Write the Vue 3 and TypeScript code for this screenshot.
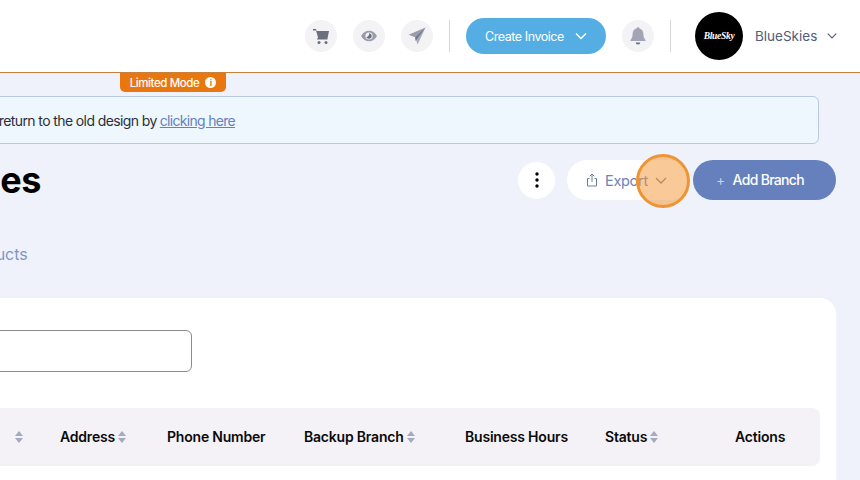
<script setup lang="ts">
const columns = [
  { label: 'Branch Name', sort: true },
  { label: 'Address', sort: true },
  { label: 'Phone Number', sort: false },
  { label: 'Backup Branch', sort: true },
  { label: 'Business Hours', sort: false },
  { label: 'Status', sort: true },
  { label: 'Actions', sort: false },
]
</script>

<template>
  <div class="app">
    <header class="topbar">
      <button class="round-icon" aria-label="Cart">
        <svg width="18" height="18" viewBox="0 0 18 18">
          <path d="M1 2h3l.6 2H17l-1.400 7H6.200L4 3.400H1z" fill="#6b6f7e" />
          <path d="M5.500 11h10v1.600H5z" fill="#6b6f7e" />
          <circle cx="7" cy="15.400" r="1.500" fill="#6b6f7e" />
          <circle cx="14" cy="15.400" r="1.500" fill="#6b6f7e" />
        </svg>
      </button>
      <button class="round-icon" aria-label="Preview">
        <svg width="18" height="18" viewBox="0 0 18 18">
          <path d="M1 9c2-3.600 4.800-5.300 8-5.300S15 5.400 17 9c-2 3.600-4.800 5.300-8 5.300S3 12.600 1 9z" fill="#9a9cab" />
          <circle cx="9" cy="9" r="3.600" fill="#f3f3f5" />
          <path d="M9 6.200A2.800 2.800 0 1 1 6.300 10 3 3 0 0 0 9 6.200z" fill="#6b6f7e" />
        </svg>
      </button>
      <button class="round-icon" aria-label="Send">
        <svg width="20" height="20" viewBox="0 0 20 20">
          <path d="M18.500 1.500 1.500 8.800l6.600 2.400z" fill="#9a9cab" />
          <path d="M18.500 1.500 8.100 11.200l2.500 7.300z" fill="#a9abb8" />
          <path d="M18.500 1.500 8.100 11.200l.5 3.800z" fill="#74778a" />
        </svg>
      </button>
      <span class="divider"></span>
      <button class="create-btn">
        Create Invoice
        <svg width="12" height="8" viewBox="0 0 12 8"><path d="M1 1.500 6 6.500l5-5" fill="none" stroke="#fff" stroke-width="1.300" /></svg>
      </button>
      <button class="round-icon bell" aria-label="Notifications">
        <svg width="18" height="20" viewBox="0 0 18 20">
          <path d="M9 1.200c.9 0 1.500.6 1.500 1.400 2.700.7 3.900 2.900 3.900 5.500 0 3 .8 4.400 2.100 5.900v1H1.500v-1c1.300-1.500 2.100-2.900 2.100-5.900 0-2.600 1.200-4.800 3.900-5.500 0-.8.600-1.400 1.500-1.400z" fill="#a3a5b6" />
          <path d="M6.700 16.500h4.600a2.300 2 0 0 1-4.600 0z" fill="#6b6f7e" />
        </svg>
      </button>
      <span class="divider divider--user"></span>
      <div class="avatar"><span>BlueSky</span></div>
      <span class="username">BlueSkies</span>
      <svg class="user-caret" width="10" height="6" viewBox="0 0 10 6"><path d="M.7.7 5 5 9.300.7" fill="none" stroke="#505d78" stroke-width="1.100" /></svg>
    </header>

    <div class="limited">
      Limited Mode
      <span class="limited__info">i</span>
    </div>

    <main class="page">
      <div class="banner">
        <p>You are viewing the new design. You can give us feedback or return to the old design by <a href="#">clicking here</a></p>
      </div>

      <section class="title-row">
        <h1>Branches</h1>
        <div class="title-row__actions">
          <button class="kebab" aria-label="More">
            <svg width="4" height="16" viewBox="0 0 4 16">
              <circle cx="2" cy="2" r="1.700" fill="#000" />
              <circle cx="2" cy="8" r="1.700" fill="#000" />
              <circle cx="2" cy="14" r="1.700" fill="#000" />
            </svg>
          </button>
          <button class="export-btn">
            <svg width="12" height="14" viewBox="0 0 12 14">
              <path d="M3.500 5.500H1.500v7.500h9V5.500H8.500M6 9V1.200M3.800 3.200 6 1l2.200 2.200" fill="none" stroke="#6d7f9f" stroke-width="1" />
            </svg>
            <span>Export</span>
            <svg width="12" height="7" viewBox="0 0 12 7"><path d="M1 1l5 5 5-5" fill="none" stroke="#75808f" stroke-width="1.300" /></svg>
          </button>
          <button class="add-btn"><span class="add-btn__plus">+</span>Add Branch</button>
        </div>
      </section>

      <nav class="tabs">
        <span>All Products</span>
      </nav>

      <section class="card">
        <div class="search"></div>
        <div class="table-head">
          <div v-for="col in columns" :key="col.label" class="table-head__cell">
            {{ col.label }}
            <svg v-if="col.sort" width="8" height="12" viewBox="0 0 8 12">
              <path d="M4 0l4 5H0z" fill="#a4aabf" />
              <path d="M4 12l4-5H0z" fill="#a4aabf" />
            </svg>
          </div>
        </div>
      </section>
    </main>

    <div class="cursor-dot"></div>
  </div>
</template>

<style>
html,
body {
  margin: 0;
  background: #eff2fa;
}
</style>

<style scoped>
.app {
  position: relative;
  width: 860px;
  height: 480px;
  overflow: hidden;
  background: #eff2fa;
  font-family: Inter, "Liberation Sans", sans-serif;
  letter-spacing: -0.3px;
}

button {
  font: inherit;
  letter-spacing: inherit;
  border: 0;
  cursor: pointer;
}

.topbar {
  display: flex;
  align-items: center;
  justify-content: flex-end;
  box-sizing: border-box;
  height: 73px;
  padding-right: 23px;
  background: #fff;
  border-bottom: 1px solid #c8803f;
}

.round-icon {
  display: flex;
  align-items: center;
  justify-content: center;
  width: 32px;
  height: 32px;
  padding: 0;
  margin-right: 16px;
  border-radius: 50%;
  background: #f3f3f5;
}

.divider {
  width: 1px;
  height: 32px;
  margin-right: 16px;
  background: #d6d6d8;
}

.divider--user {
  margin-right: 24px;
}

.create-btn {
  display: flex;
  align-items: center;
  justify-content: center;
  gap: 11px;
  width: 140px;
  height: 36px;
  margin-right: 16px;
  border-radius: 18px;
  background: #54aee3;
  color: #fff;
  font-size: 12.5px;
  letter-spacing: -0.45px;
}

.avatar {
  display: flex;
  align-items: center;
  justify-content: center;
  width: 48px;
  height: 48px;
  margin-right: 12px;
  border-radius: 50%;
  background: #000;
  color: #fff;
  font-family: "Liberation Serif", serif;
  font-size: 9.5px;
  font-style: italic;
  font-weight: 700;
}

.username {
  width: 61px;
  margin-right: 11px;
  color: #505d78;
  font-size: 13.5px;
  letter-spacing: 0;
  white-space: nowrap;
}

.limited {
  position: absolute;
  top: 73px;
  left: 120px;
  display: flex;
  align-items: center;
  justify-content: center;
  gap: 6px;
  width: 106px;
  height: 19px;
  border-radius: 0 0 5px 5px;
  background: #e8770f;
  color: #fff;
  font-size: 11.5px;
  font-weight: 500;
  letter-spacing: -0.4px;
}

.limited__info {
  display: flex;
  align-items: center;
  justify-content: center;
  width: 11px;
  height: 11px;
  border-radius: 50%;
  background: #fff;
  color: #e8770f;
  font-size: 9px;
  font-weight: 700;
  letter-spacing: 0;
}

.page {
  width: 1036px;
  margin-left: -200px;
}

.banner {
  display: flex;
  align-items: center;
  justify-content: flex-start;
  box-sizing: border-box;
  height: 48px;
  margin: 23px 17px 0 0;
  border: 1px solid #b9c9df;
  border-radius: 6px;
  background: #eef7fe;
}

.banner p {
  display: flex;
  justify-content: flex-end;
  gap: 3px;
  flex: 0 0 434px;
  min-width: 0;
  margin: 0;
  color: #2b2f38;
  font-size: 14px;
  letter-spacing: -0.6px;
  white-space: nowrap;
}

.banner a {
  color: #6580bd;
  letter-spacing: -0.7px;
}

.title-row {
  display: flex;
  align-items: center;
  justify-content: space-between;
  height: 40px;
  margin-top: 16px;
}

.title-row h1 {
  margin: 0 0 0 79px;
  color: #000;
  font-size: 36px;
  font-weight: 700;
  letter-spacing: -0.6px;
}

.title-row__actions {
  display: flex;
  align-items: center;
}

.kebab {
  display: flex;
  align-items: center;
  justify-content: center;
  width: 37px;
  height: 37px;
  margin-right: 12px;
  padding: 0;
  border-radius: 50%;
  background: #fff;
}

.export-btn {
  display: flex;
  align-items: center;
  gap: 7px;
  box-sizing: border-box;
  width: 123px;
  height: 40px;
  margin-right: 3px;
  padding-left: 19px;
  border-radius: 20px;
  background: #fff;
  color: #6d83b8;
  font-size: 14.5px;
}

.add-btn {
  display: flex;
  align-items: center;
  justify-content: flex-start;
  gap: 8px;
  box-sizing: border-box;
  width: 143px;
  height: 40px;
  padding: 0 0 1px 23px;
  border-radius: 20px;
  background: #6580bd;
  color: #fff;
  font-size: 14px;
  font-weight: 500;
  letter-spacing: -0.7px;
}

.add-btn__plus {
  color: #c6d2ea;
  font-weight: 400;
}

.tabs {
  display: flex;
  align-items: center;
  justify-content: flex-start;
  height: 24px;
  margin: 42px 0 0 0;
  padding-left: 137px;
  color: #8296c4;
  font-size: 16px;
  letter-spacing: 0;
}

.card {
  box-sizing: border-box;
  height: 240px;
  margin-top: 32px;
  padding: 32px 16px 0 100px;
  border-radius: 16px;
  background: #fff;
}

.search {
  box-sizing: border-box;
  width: 292px;
  height: 42px;
  border: 1px solid #8c8c8c;
  border-radius: 6px;
}

.table-head {
  display: grid;
  grid-template-columns: 160px 107px 137px 161px 140px 130px 85px;
  height: 58px;
  margin-top: 36px;
  border-radius: 8px;
  background: #f4f2f7;
}

.table-head__cell {
  display: flex;
  align-items: center;
  gap: 3px;
  padding-bottom: 1px;
  color: #0a0a0a;
  font-size: 14px;
  font-weight: 600;
  letter-spacing: -0.2px;
  white-space: nowrap;
}

.table-head__cell:first-child {
  justify-content: flex-end;
  gap: 20px;
  padding-right: 37px;
}

.cursor-dot {
  position: absolute;
  top: 154px;
  left: 636px;
  box-sizing: border-box;
  width: 54px;
  height: 54px;
  border: 3px solid #ee9433;
  border-radius: 50%;
  background: rgba(243, 148, 50, 0.5);
}
</style>
